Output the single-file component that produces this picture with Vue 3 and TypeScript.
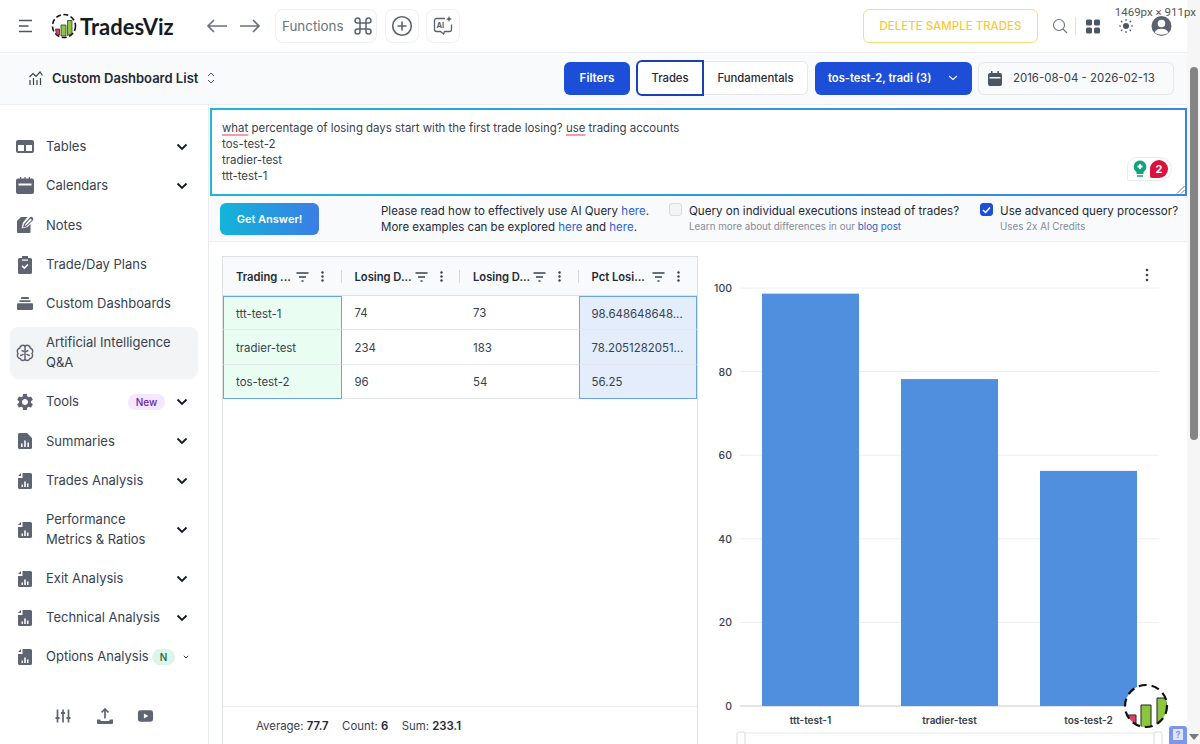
<script setup lang="ts">
interface Icon { vb?: string; d: string; stroke?: boolean }
const analysis: Icon = { d: 'M7.5 2H15.5A1.5 1.5 0 0 1 17 3.5V16.5A1.5 1.5 0 0 1 15.5 18H4.5A1.5 1.5 0 0 1 3 16.5V7H7.5z M3 5l3-3v3z M6.5 13.5v2.5H8v-2.5z M9.2 10.5v5.5h1.6v-5.5z M12 12.5v3.5h1.5v-3.5z' }
const icons: Record<string, Icon> = {
  tables: { d: 'M3 3h14a2 2 0 0 1 2 2v9a2 2 0 0 1-2 2H3a2 2 0 0 1-2-2V5a2 2 0 0 1 2-2z M3 8v6h6V8z M11 8v6h6V8z' },
  calendar: { d: 'M5 1h1.2v1.5H9.4V1h1.2v1.5H13.8V1H15v1.5h2a2 2 0 0 1 2 2V16a2 2 0 0 1-2 2H3a2 2 0 0 1-2-2V4.5a2 2 0 0 1 2-2h2z M3.5 7.5v2h13v-2z' },
  notes: { d: 'M2 6l4-4h6.5L8 7.5l-1.5 6 6-1.5 3-3V17a1 1 0 0 1-1 1H3a1 1 0 0 1-1-1z M15 2.2a2.2 2.2 0 0 1 3 3L11.5 11.5l-3.5 1 1-3.500z M15 4L10.2 9.600 9.800 11l1.200-.4 5.400-5.200a1 1 0 0 0-1.400-1.400z' },
  clipboard: { d: 'M7 1h6v2h2.500A1.500 1.500 0 0 1 17 4.500v13a1.500 1.500 0 0 1-1.500 1.500h-11A1.500 1.500 0 0 1 3 17.500v-13A1.500 1.500 0 0 1 4.500 3H7z M7 4.500v1.300h6V4.500z M6.500 11.500l1.200-1.200 1.600 1.600 3-3 1.200 1.200-4.200 4.200z' },
  stack: { d: 'M7 3h6a1 1 0 0 1 1 1v1H6V4a1 1 0 0 1 1-1z M4.500 6.300h11v1.600h-11z M3 9.300h14a1 1 0 0 1 1 1V15a1 1 0 0 1-1 1H3a1 1 0 0 1-1-1v-4.700a1 1 0 0 1 1-1z' },
  brain: { stroke: true, d: 'M10 3v14 M10 3.500C8.500 1.500 5 2.200 4.800 5 2.200 5.800 1.500 9 3 10.500 1.500 12.500 3 15.500 5 15.500 6 18 9.500 18.300 10 16 M10 3.500C11.500 1.500 15 2.200 15.200 5 17.800 5.800 18.500 9 17 10.500 18.500 12.500 17 15.500 15 15.500 14 18 10.500 18.300 10 16 M6.500 7.500c1.500 0 2 .8 2.200 1.500 M13.500 7.500c-1.500 0-2 .8-2.200 1.500 M5 12.500c1.500 0 2.500-.5 3.500-1.500 M15 12.500c-1.500 0-2.500-.5-3.500-1.500' },
  gear: { vb: '0 0 24 24', d: 'M19.14 12.94c.04-.3.06-.61.06-.94 0-.32-.02-.64-.07-.94l2.03-1.58a.49.49 0 0 0 .12-.61l-1.92-3.32a.488.488 0 0 0-.59-.22l-2.39.96c-.5-.38-1.03-.7-1.62-.94l-.36-2.54a.484.484 0 0 0-.48-.41h-3.84c-.24 0-.43.17-.47.41l-.36 2.54c-.59.24-1.13.57-1.62.94l-2.39-.96c-.22-.08-.47 0-.59.22L2.74 8.87c-.12.21-.08.47.12.61l2.03 1.58c-.05.3-.09.63-.09.94s.02.64.07.94l-2.03 1.58a.49.49 0 0 0-.12.61l1.92 3.32c.12.22.37.29.59.22l2.39-.96c.5.38 1.03.7 1.62.94l.36 2.54c.05.24.24.41.48.41h3.84c.24 0 .44-.17.47-.41l.36-2.54c.59-.24 1.13-.56 1.62-.94l2.39.96c.22.08.47 0 .59-.22l1.92-3.32c.12-.22.07-.47-.12-.61l-2.01-1.58zM12 15.6c-1.98 0-3.6-1.62-3.6-3.6s1.62-3.6 3.6-3.6 3.6 1.62 3.6 3.6-1.62 3.6-3.6 3.6z' },
  summary: { d: 'M4.500 2H12l5 5v9.500a1.500 1.500 0 0 1-1.500 1.500h-11A1.500 1.500 0 0 1 3 16.500v-13A1.500 1.500 0 0 1 4.500 2z M6 12.500V16h1.600v-3.500z M9.200 9.500V16h1.600V9.500z M12.400 11.500V16H14v-4.500z' },
  analysis,
}
interface NavItem { label: string; icon: string; chev?: boolean; tall?: boolean; active?: boolean; badge?: string; small?: boolean }
const nav: NavItem[] = [
  { label: 'Tables', icon: 'tables', chev: true },
  { label: 'Calendars', icon: 'calendar', chev: true },
  { label: 'Notes', icon: 'notes' },
  { label: 'Trade/Day Plans', icon: 'clipboard' },
  { label: 'Custom Dashboards', icon: 'stack' },
  { label: 'Artificial Intelligence Q&A', icon: 'brain', tall: true, active: true },
  { label: 'Tools', icon: 'gear', chev: true, badge: 'New' },
  { label: 'Summaries', icon: 'summary', chev: true },
  { label: 'Trades Analysis', icon: 'analysis', chev: true },
  { label: 'Performance Metrics & Ratios', icon: 'analysis', chev: true, tall: true },
  { label: 'Exit Analysis', icon: 'analysis', chev: true },
  { label: 'Technical Analysis', icon: 'analysis', chev: true },
  { label: 'Options Analysis', icon: 'analysis', chev: true, badge: 'N', small: true },
]
const columns = ['Trading ...', 'Losing D...', 'Losing D...', 'Pct Losi...']
const rows = [
  ['ttt-test-1', '74', '73', '98.648648648...'],
  ['tradier-test', '234', '183', '78.2051282051...'],
  ['tos-test-2', '96', '54', '56.25'],
]
const yOf = (v: number) => 706 - v * 4.18
const ticks = [100, 80, 60, 40, 20, 0]
const bars = [
  { label: 'ttt-test-1', value: 98.65, x: 762 },
  { label: 'tradier-test', value: 78.21, x: 901 },
  { label: 'tos-test-2', value: 56.25, x: 1040 },
]
</script>

<template>
  <div class="root">
    <div class="page">
      <header class="top">
        <div class="top-left">
          <svg class="burger" width="16" height="14" viewBox="0 0 16 14"><path d="M1 1.500h13M1 7h9.500M1 12.500h13" fill="none" stroke="#4b5563" stroke-width="1.600" /></svg>
          <svg class="logo" width="26" height="26" viewBox="0 0 26 26">
            <circle cx="13" cy="13" r="11.500" fill="#fff" stroke="#111" stroke-width="1.600" stroke-dasharray="5 2.600" />
            <path d="M4.500 16h4v6h-3z" fill="#d8435f" stroke="#222" stroke-width=".7" />
            <path d="M10 12h5v11h-5z" fill="#8cc63f" stroke="#222" stroke-width=".7" />
            <path d="M16.500 7.500h4.500v13l-4.500 2z" fill="#8cc63f" stroke="#222" stroke-width=".7" />
          </svg>
          <span class="brand">TradesViz</span>
          <svg class="arrow" width="22" height="16" viewBox="0 0 22 16"><path d="M21 8H2M8 2L2 8l6 6" fill="none" stroke="#6b7280" stroke-width="1.700" /></svg>
          <svg class="arrow" width="22" height="16" viewBox="0 0 22 16"><path d="M1 8h19M14 2l6 6-6 6" fill="none" stroke="#6b7280" stroke-width="1.700" /></svg>
          <div class="tool func">
            <span>Functions</span>
            <svg width="18" height="18" viewBox="0 0 18 18"><path d="M6 6h6v6H6zM6 6V3.500A2.500 2.500 0 1 0 3.500 6zM12 6h2.500A2.500 2.500 0 1 0 12 3.500zM6 12H3.500A2.500 2.500 0 1 0 6 14.500zM12 12v2.500A2.500 2.500 0 1 0 14.500 12z" fill="none" stroke="#5b6270" stroke-width="1.500" /></svg>
          </div>
          <div class="tool square">
            <svg width="22" height="22" viewBox="0 0 22 22"><circle cx="11" cy="11" r="9.300" fill="none" stroke="#5b6270" stroke-width="1.600" /><path d="M11 6.500v9M6.500 11h9" stroke="#5b6270" stroke-width="1.600" /></svg>
          </div>
          <div class="tool square">
            <svg width="22" height="22" viewBox="0 0 22 22">
              <path d="M13 3.500H4.500a2 2 0 0 0-2 2v9a2 2 0 0 0 2 2h4l3 2.500 1-2.500h5a2 2 0 0 0 2-2V9.500" fill="none" stroke="#5b6270" stroke-width="1.300" />
              <text x="4.500" y="13.300" class="ai">AI</text>
              <path d="M17 1l.9 2.100L20 4l-2.100.9L17 7l-.9-2.100L14 4l2.100-.9z" fill="#5b6270" />
            </svg>
          </div>
        </div>
        <div class="top-right">
          <button class="delete">DELETE SAMPLE TRADES</button>
          <svg class="search" width="17" height="17" viewBox="0 0 17 17"><circle cx="7" cy="7" r="5.500" fill="none" stroke="#6b7280" stroke-width="1.100" /><path d="M11 11l4 4" stroke="#6b7280" stroke-width="1.100" /></svg>
          <span class="vline"></span>
          <svg class="apps" width="14" height="15" viewBox="0 0 14 15"><rect x="0" y="0.500" width="6" height="6" rx="1.500" fill="#4b5563" /><rect x="8" y="0.500" width="6" height="6" rx="1.500" fill="#4b5563" /><rect x="0" y="8.500" width="6" height="6" rx="1.500" fill="#4b5563" /><rect x="8" y="8.500" width="6" height="6" rx="1.500" fill="#4b5563" /></svg>
          <svg class="sun" width="14" height="14" viewBox="0 0 14 14"><circle cx="7" cy="7" r="3" fill="#4b5563" /><path d="M7 0v2M7 12v2M0 7h2M12 7h2M2 2l1.400 1.400M10.600 10.600L12 12M2 12l1.400-1.400M10.600 3.400L12 2" stroke="#4b5563" stroke-width="1.100" /></svg>
          <svg class="user" width="21" height="22" viewBox="0 0 21 22"><circle cx="10.500" cy="11" r="10" fill="#5b6270" /><circle cx="10.500" cy="8.500" r="3.800" fill="#fff" /><path d="M3.500 17.500c1.500-3 4-3.800 7-3.800s5.500.8 7 3.800c-3.500 3-10.500 3-14 0z" fill="#fff" /></svg>
        </div>
      </header>

      <div class="bar">
        <div class="bar-left">
          <svg width="16" height="16" viewBox="0 0 16 16"><path d="M1.500 7L5 3.500 8 6.500 12 2l2.500 3.500M2 10v5M5.500 8v7M9 10v5M12.500 8v7" fill="none" stroke="#374151" stroke-width="1.200" /></svg>
          <strong>Custom Dashboard List</strong>
          <svg class="updown" width="8" height="12" viewBox="0 0 8 12"><path d="M1 4l3-3 3 3M1 8l3 3 3-3" fill="none" stroke="#4b5563" stroke-width="1" /></svg>
        </div>
        <div class="bar-right">
          <button class="primary filters">Filters</button>
          <div class="seg">
            <span class="seg-on">Trades</span>
            <span class="seg-off">Fundamentals</span>
          </div>
          <button class="primary acct">
            <span>tos-test-2, tradi (3)</span>
            <svg width="10" height="6" viewBox="0 0 10 6"><path d="M1 1l4 3.500L9 1" fill="none" stroke="#fff" stroke-width="1.100" /></svg>
          </button>
          <div class="dates">
            <svg width="14" height="15" viewBox="0 0 14 15"><path d="M3 0h1.500v2h5V0H11v2h1a2 2 0 0 1 2 2v9a2 2 0 0 1-2 2H2a2 2 0 0 1-2-2V4a2 2 0 0 1 2-2h1zM1.500 6v1.500h11V6z" fill="#4b5563" fill-rule="evenodd" /></svg>
            <span>2016-08-04 - 2026-02-13</span>
          </div>
        </div>
      </div>

      <div class="body">
        <aside class="side">
          <nav class="nav">
            <div v-for="item in nav" :key="item.label" class="item" :class="{ tall: item.tall, active: item.active }">
              <svg class="nav-icon" width="20" height="20" :viewBox="icons[item.icon].vb || '0 0 20 20'">
                <path
                  :d="icons[item.icon].d"
                  :fill="icons[item.icon].stroke ? 'none' : '#5f6472'"
                  :stroke="icons[item.icon].stroke ? '#5f6472' : 'none'"
                  :stroke-width="icons[item.icon].stroke ? 1.500 : 0"
                  fill-rule="evenodd"
                />
              </svg>
              <span class="label" :class="{ nowrap: !item.tall }">{{ item.label }}</span>
              <span v-if="item.badge" class="badge" :class="item.small ? 'green' : 'purple'">{{ item.badge }}</span>
              <svg v-if="item.chev && !item.small" class="chev" width="12" height="8" viewBox="0 0 12 8"><path d="M1.500 1.500L6 6l4.500-4.500" fill="none" stroke="#111827" stroke-width="1.800" /></svg>
              <svg v-if="item.small" class="chev-s" width="6" height="4" viewBox="0 0 6 4"><path d="M.8.8L3 3 5.200.8" fill="none" stroke="#374151" stroke-width="1" /></svg>
            </div>
          </nav>
          <div class="side-foot">
            <svg width="16" height="16" viewBox="0 0 16 16"><path d="M2.500 1.500v13M8 1.500v13M13.500 1.500v13" stroke="#5f6472" stroke-width="1.700" /><path d="M.5 10h4M6 5h4M11.500 10h4" stroke="#5f6472" stroke-width="2" /></svg>
            <svg width="18" height="18" viewBox="0 0 18 18"><path d="M1 12.500h3.500a1 1 0 0 0 1 1.500h7a1 1 0 0 0 1-1.500H17V16a1 1 0 0 1-1 1H2a1 1 0 0 1-1-1z" fill="#5f6472" /><path d="M9 11.500V2M5.500 5.500L9 2l3.500 3.500" fill="none" stroke="#5f6472" stroke-width="1.700" /></svg>
            <svg class="yt" width="17" height="14" viewBox="0 0 18 14"><path d="M3.500 1h11A2.500 2.500 0 0 1 17 3.500v7a2.500 2.500 0 0 1-2.500 2.500h-11A2.500 2.500 0 0 1 1 10.500v-7A2.500 2.500 0 0 1 3.500 1zM7.300 4.300v5.400L12 7z" fill="#5f6472" fill-rule="evenodd" /></svg>
          </div>
        </aside>

        <main class="main">
          <div class="query">
            <div class="query-text">
              <div><span class="spell">what</span> percentage of losing days start with the first trade losing? <span class="spell">use</span> trading accounts</div>
              <div>tos-test-2</div>
              <div>tradier-test</div>
              <div>ttt-test-1</div>
            </div>
            <div class="grammar">
              <svg width="14" height="18" viewBox="0 0 14 18"><path d="M7 .5a6.300 6.300 0 0 1 3.500 11.500V14h-7v-2A6.300 6.300 0 0 1 7 .5z" fill="#10a37f" /><path d="M7 4v5M4.500 6.500h5" stroke="#fff" stroke-width="1.800" /><path d="M4 16h6" stroke="#10a37f" stroke-width="1.500" /></svg>
              <span class="grammar-count">2</span>
            </div>
            <svg class="resize" width="9" height="9" viewBox="0 0 9 9"><path d="M8.500 1L1 8.500M8.500 5L5 8.500" stroke="#777" stroke-width="1" /></svg>
          </div>

          <div class="opts">
            <button class="answer">Get Answer!</button>
            <div class="help">
              <div>Please read how to effectively use AI Query <a>here</a>.</div>
              <div>More examples can be explored <a>here</a> and <a>here</a>.</div>
            </div>
            <div class="check first">
              <span class="box"></span>
              <div>
                <div class="check-title">Query on individual executions instead of trades?</div>
                <div class="check-sub">Learn more about differences in our <a>blog post</a></div>
              </div>
            </div>
            <div class="check second">
              <span class="box on">
                <svg width="9" height="8" viewBox="0 0 9 8"><path d="M1 4l2.500 2.500L8 1.500" fill="none" stroke="#fff" stroke-width="1.500" /></svg>
              </span>
              <div>
                <div class="check-title">Use advanced query processor?</div>
                <div class="check-sub">Uses 2x AI Credits</div>
              </div>
            </div>
          </div>

          <div class="results">
            <section class="grid">
              <div class="head">
                <div v-for="(c, i) in columns" :key="i" class="hcell">
                  <span class="hname">{{ c }}</span>
                  <svg class="hfilter" width="13" height="10" viewBox="0 0 13 10"><path d="M.5 1h12M3 5h7M5.500 9h2" stroke="#374151" stroke-width="1.400" /></svg>
                  <svg class="hdots" width="3" height="11" viewBox="0 0 3 11"><circle cx="1.500" cy="1.500" r="1.200" fill="#374151" /><circle cx="1.500" cy="5.500" r="1.200" fill="#374151" /><circle cx="1.500" cy="9.500" r="1.200" fill="#374151" /></svg>
                  <span v-if="i < 3" class="hsep"></span>
                </div>
              </div>
              <div class="rows">
                <div v-for="(r, ri) in rows" :key="ri" class="row">
                  <div
                    v-for="(v, ci) in r"
                    :key="ci"
                    class="cell"
                    :class="{ cat: ci === 0, val: ci === 3, tb: ri === 0 && (ci === 0 || ci === 3), bb: ri === 2 && (ci === 0 || ci === 3) }"
                  >{{ v }}</div>
                </div>
              </div>
              <div class="foot">
                <span>Average: <b>77.7</b></span>
                <span>Count: <b>6</b></span>
                <span>Sum: <b>233.1</b></span>
              </div>
            </section>

            <section class="chart">
              <svg width="489" height="488" viewBox="698 256 489 488">
                <g v-for="t in ticks" :key="t">
                  <line x1="740" x2="1159" :y1="yOf(t)" :y2="yOf(t)" :stroke="t === 0 ? '#c4c7cc' : '#eceef0'" stroke-width="1" />
                  <text x="732" :y="yOf(t) + 4" text-anchor="end" class="axis">{{ t }}</text>
                </g>
                <g v-for="b in bars" :key="b.label">
                  <rect :x="b.x" :y="yOf(b.value)" width="97" :height="706 - yOf(b.value)" fill="#4f8fde" />
                  <text :x="b.x + 48.500" y="724" text-anchor="middle" class="axis cat-label">{{ b.label }}</text>
                </g>
                <g fill="#374151"><circle cx="1147" cy="270" r="1.300" /><circle cx="1147" cy="275" r="1.300" /><circle cx="1147" cy="280" r="1.300" /></g>
                <rect x="741" y="733" width="417" height="14" fill="none" stroke="#e5e7eb" />
                <rect x="737" y="732" width="8" height="14" rx="2" fill="#fff" stroke="#d8dadd" />
                <rect x="1154" y="732" width="8" height="14" rx="2" fill="#fff" stroke="#d8dadd" />
              </svg>
            </section>
          </div>

          <svg class="float-logo" width="46" height="46" viewBox="0 0 46 46">
            <defs><clipPath id="fl"><circle cx="23" cy="23" r="21" /></clipPath></defs>
            <circle cx="23" cy="23" r="21" fill="#fff" />
            <g clip-path="url(#fl)">
              <path d="M5 32h8v14H5z" fill="#e0405e" stroke="#222" stroke-width="1" />
              <path d="M18 22h10v24H18z" fill="#8cc63f" stroke="#222" stroke-width="1" />
              <path d="M34 15h10v31H34z" fill="#8cc63f" stroke="#222" stroke-width="1" />
            </g>
            <circle cx="23" cy="23" r="21" fill="none" stroke="#111" stroke-width="2.200" stroke-dasharray="8 5" />
          </svg>
          <div class="help-btn"><span>?</span></div>
        </main>
      </div>
    </div>

    <div class="scroll"><div class="thumb"></div><span class="scroll-down"></span></div>
    <span class="dims">1469px × 911px</span>
  </div>
</template>

<style>
html, body { margin: 0; padding: 0; overflow: hidden; }
</style>

<style scoped>
.root { position: relative; display: flex; width: 1200px; height: 744px; overflow: hidden; background: #fff; font-family: Inter, "Liberation Sans", sans-serif; color: #374151; }
.page { width: 1187px; display: flex; flex-direction: column; flex: none; }
.top { height: 52px; border-bottom: 1px solid #eceef1; display: flex; align-items: center; justify-content: space-between; flex: none; }
.top-left { display: flex; align-items: center; padding-left: 18px; }
.burger { margin-right: 17px; }
.logo { margin-right: 3px; }
.brand { font-family: Lato, sans-serif; font-weight: 700; font-size: 22px; color: #161a22; width: 126px; }
.arrow { margin-right: 11px; }
.tool { height: 34px; border: 1px solid #eff0f2; border-radius: 8px; display: flex; align-items: center; justify-content: center; box-sizing: border-box; flex: none; }
.func { width: 102px; gap: 10px; margin-left: 3px; margin-right: 8px; padding-left: 6px; font-size: 13.400px; color: #6b7280; justify-content: flex-start; }
.square { width: 34px; margin-right: 7px; }
.ai { font-family: Inter, sans-serif; font-size: 7.500px; font-weight: 700; fill: #5b6270; }
.top-right { display: flex; align-items: center; padding-right: 15px; }
.delete { width: 175px; height: 34px; border: 1px solid #f9dd7a; border-radius: 6px; background: #fff; color: #f8cb35; font: 500 11.500px Inter, sans-serif; padding: 0; }
.search { margin-left: 14px; }
.vline { width: 1px; height: 18px; background: #e2e4e8; margin-left: 6px; }
.apps { margin-left: 10px; }
.sun { margin-left: 19px; }
.user { margin-left: 18px; }

.bar { height: 52px; box-sizing: border-box; background: #f9fafb; border-bottom: 1px solid #eceef1; padding-bottom: 1px; display: flex; align-items: center; justify-content: space-between; flex: none; }
.bar-left { display: flex; align-items: center; padding-left: 28px; }
.bar-left strong { font-size: 13px; font-weight: 600; color: #1f2937; margin-left: 8px; }
.updown { margin-left: 9px; }
.bar-right { display: flex; align-items: center; padding-right: 13px; }
.primary { background: #1d4ed8; color: #fff; border: 0; border-radius: 6px; height: 33px; font: 600 11.600px Inter, sans-serif; }
.filters { width: 66px; margin-right: 6px; padding: 0; }
.seg { display: flex; align-items: center; font-size: 11.300px; font-weight: 500; color: #1f2937; margin-right: 7px; }
.seg-on { width: 68px; height: 36px; border: 2px solid #1e40af; border-radius: 6px 0 0 6px; box-sizing: border-box; display: flex; align-items: center; justify-content: center; background: #fff; }
.seg-off { width: 104px; height: 34px; border: 1px solid #e5e7eb; border-left: 0; border-radius: 0 6px 6px 0; box-sizing: border-box; display: flex; align-items: center; justify-content: center; background: #fff; }
.acct { width: 157px; margin-right: 6px; display: flex; align-items: center; justify-content: space-between; padding: 0 14px 0 13px; font-size: 11.200px; }
.dates { width: 196px; height: 33px; border: 1px solid #e5e7eb; border-radius: 6px; box-sizing: border-box; display: flex; align-items: center; gap: 11px; padding-left: 9px; font-size: 11.450px; color: #374151; }

.body { flex: 1; display: flex; min-height: 0; }
.side { width: 208px; border-right: 1px solid #e9ebee; flex: none; display: flex; flex-direction: column; padding-top: 26px; }
.nav { display: flex; flex-direction: column; gap: 7.200px; margin: 0 10px; }
.item { height: 32px; display: flex; align-items: center; padding: 0 10px 0 5px; font-size: 13px; line-height: 19.600px; color: #374151; border-radius: 8px; }
.item.tall { height: 52px; }
.item.active { background: #f3f4f6; }
.nav-icon { flex: none; margin-right: 11px; }
.label { flex: 1; min-width: 0; }
.label.nowrap { white-space: nowrap; }
.tall .label { max-width: 128px; margin-right: auto; }
.badge { font-size: 10px; font-weight: 500; border-radius: 9px; height: 16px; line-height: 16px; text-align: center; flex: none; }
.purple { background: #f3e8ff; color: #6b21a8; width: 37px; margin-right: 11px; }
.green { background: #dcf5ea; color: #166534; width: 23px; margin-right: 8px; }
.chev { flex: none; }
.chev-s { flex: none; margin-right: -1px; }
.side-foot { display: flex; align-items: center; padding: 32px 0 0 55px; gap: 25px; margin-top: 2px; }
.yt { margin-left: -2px; }
.main { position: relative; flex: 1; min-width: 0; display: flex; flex-direction: column; background: #fff; padding-top: 3px; }
.query { position: relative; margin-left: 1px; height: 88px; box-sizing: border-box; border: 2px solid; border-image: linear-gradient(90deg, #1eb6d2, #3b82e6) 1; background: #fff; padding: 9.500px 10px; flex: none; }
.query-text { font-size: 11.450px; line-height: 16.300px; color: #374151; }
.spell { text-decoration: underline solid #f59ab0 1.500px; text-underline-offset: 2px; }
.grammar { position: absolute; right: 13px; bottom: 13px; width: 45px; height: 24px; border: 1px solid #e8eaec; border-radius: 10px 12px 12px 2px; display: flex; align-items: center; gap: 3px; padding-left: 5px; box-sizing: border-box; background: #fff; }
.grammar-count { width: 18px; height: 18px; border-radius: 9px 9px 9px 2px; background: #d9123c; color: #fff; font: 700 11px/18px Inter, sans-serif; text-align: center; }
.resize { position: absolute; right: 0; bottom: 0; }
.opts { height: 46px; box-sizing: border-box; background: #f9fafb; border-bottom: 1px solid #eceef1; display: flex; align-items: flex-start; flex: none; }
.answer { width: 99px; height: 32px; margin: 7px 0 0 11px; border: 0; border-radius: 6px; background: linear-gradient(90deg, #12b5d8, #3b7de6); color: #fff; font: 600 11px Inter, sans-serif; padding: 0; flex: none; }
.help { margin: 7px 0 0 62px; width: 288px; flex: none; font-size: 11.500px; line-height: 16.300px; color: #1f2937; white-space: nowrap; }
a { color: #2f5fd0; }
.check { display: flex; gap: 7px; margin-top: 7px; flex: none; }
.first { width: 311px; }
.box { width: 13px; height: 13px; flex: none; border: 1px solid #d8dbe0; border-radius: 3px; background: #f3f4f6; box-sizing: border-box; margin-top: 0; display: flex; align-items: center; justify-content: center; }
.box.on { background: #1d4ed8; border-color: #1d4ed8; }
.check-title { font-size: 11.600px; line-height: 16.300px; color: #1f2937; white-space: nowrap; }
.check-sub { font-size: 9.800px; line-height: 13.500px; color: #858b96; white-space: nowrap; margin-top: 1px; }
.results { display: flex; flex: 1; min-height: 0; padding: 14px 0 0 13px; }
.grid { width: 476px; flex: none; border: 1px solid #dde1e6; border-bottom: 0; box-sizing: border-box; display: flex; flex-direction: column; }
.head { display: grid; grid-template-columns: repeat(4, 1fr); height: 39px; background: #f9fafb; border-bottom: 1px solid #dde1e6; flex: none; box-sizing: border-box; }
.hcell { position: relative; display: flex; align-items: center; font-size: 11.200px; font-weight: 600; color: #1f2937; padding: 1px 0 0 13px; }
.hname { white-space: nowrap; width: 60px; flex: none; }
.hfilter { flex: none; }
.hdots { margin-left: 12px; flex: none; }
.hsep { position: absolute; right: 0; top: 13px; height: 13px; width: 1px; background: #d5d8dd; }
.rows { flex: 1; }
.row { display: grid; grid-template-columns: repeat(4, 1fr); height: 34.400px; }
.cell { border-bottom: 1px solid #e5e8ec; font-size: 11.450px; padding: 1px 0 0 13px; display: flex; align-items: center; box-sizing: border-box; color: #374151; white-space: nowrap; overflow: hidden; }
.cat { background: #e9fdf3; border-left: 1px solid #6aa5dc; border-right: 1px solid #6aa5dc; padding-left: 12px; }
.val { background: #e4edfb; border-left: 1px solid #6aa5dc; border-right: 1px solid #6aa5dc; padding-left: 12px; }
.tb { border-top: 1px solid #6aa5dc; }
.bb { border-bottom: 1px solid #6aa5dc; }
.foot { height: 37px; border-top: 1px solid #e9ebee; display: flex; align-items: center; gap: 13.500px; padding-left: 33px; font-size: 11.400px; color: #374151; flex: none; }
.foot b { font-weight: 600; color: #1f2937; }
.chart { flex: 1; min-width: 0; }
.axis { font: 500 10.500px Inter, sans-serif; fill: #374151; }
.cat-label { font-size: 10px; font-weight: 600; }
.float-logo { position: absolute; left: 914px; top: 578px; }
.help-btn { position: absolute; right: 0; bottom: 0; width: 18px; height: 18px; border-radius: 3px 3px 0 0; background: #7c97ea; display: flex; justify-content: center; }
.help-btn span { width: 10px; height: 11px; margin-top: 3px; background: #dfe6fb; color: #7c97ea; font: 700 9px/11px Inter, sans-serif; text-align: center; }
.scroll { width: 13px; position: relative; background: #f6f6f6; flex: none; }
.thumb { position: absolute; left: 3px; top: 67px; width: 8px; height: 373px; background: #858585; border-radius: 4px; }
.scroll-down { position: absolute; left: 2px; bottom: 4px; border: 5px solid transparent; border-top: 6px solid #7a7a7a; border-bottom: 0; }
.dims { position: absolute; right: 4px; top: 5px; font: 11.500px Roboto, sans-serif; color: #555; }
</style>
